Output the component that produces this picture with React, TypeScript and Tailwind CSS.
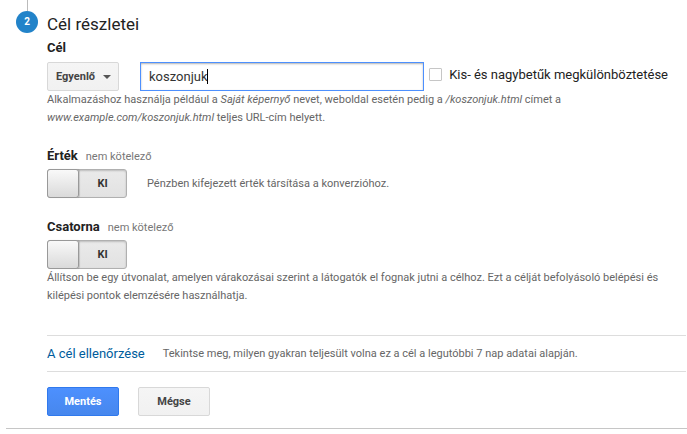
import React, { useState } from 'react'

const buttonBase = 'h-[29px] w-[72px] rounded-xs border text-[11px] font-bold cursor-pointer'

function Toggle({ labelId }: { labelId: string }) {
  const [on, setOn] = useState(false)

  return (
    <button
      type="button"
      role="switch"
      aria-checked={on}
      aria-labelledby={labelId}
      onClick={() => setOn(!on)}
      className={`flex h-[29px] w-20 shrink-0 rounded-[3px] border border-[#b0b0b0] bg-linear-to-b from-[#eaeaea] to-[#e2e2e2] shadow-[inset_0_1px_2px_rgba(0,0,0,0.2)] cursor-pointer ${on ? 'flex-row-reverse' : ''}`}
    >
      <span className="-my-px -ml-px h-[29px] w-8 rounded-[3px] border border-[#999] bg-linear-to-b from-[#f9f9f9] to-[#dadada] shadow-[1px_0_1px_rgba(0,0,0,0.15)]" />
      <span className="flex-1 text-[11px] leading-[27px] font-bold text-[#333]">{on ? 'BE' : 'KI'}</span>
    </button>
  )
}

function OptionTitle({ id, title }: { id: string; title: string }) {
  return (
    <div className="flex items-baseline gap-2 leading-5">
      <h3 id={id} className="text-[13px] font-bold text-[#222]">{title}</h3>
      <span className="text-[11px] text-[#777]">nem kötelező</span>
    </div>
  )
}

export default function App() {
  const [value, setValue] = useState('koszonjuk')
  const [caseSensitive, setCaseSensitive] = useState(false)

  return (
    <main className="bg-white pl-1.5 font-['Roboto','Liberation_Sans',sans-serif] text-[11px] leading-[18px] text-[#666]">
      <form className="flex border-b border-[#c6c6c6] pb-3 pl-2.5" onSubmit={(e) => e.preventDefault()}>
        <div className="flex w-[22px] shrink-0 flex-col items-center">
          <div className="h-[11px] w-px bg-[#bbb]" />
          <div className="flex size-[22px] items-center justify-center rounded-full bg-[#2283c9] text-[10px] font-bold text-white">2</div>
        </div>

        <div className="ml-[9px] mr-px min-w-0 flex-1 pt-3">
          <h2 className="text-[17px] leading-6 text-[#222]">Cél részletei</h2>
          <h3 id="goal" className="mt-0.5 text-[13px] leading-5 font-bold text-[#222]">Cél</h3>

          <div className="mt-1 flex items-center">
            <div className="relative shrink-0">
              <select
                aria-labelledby="goal"
                className={`${buttonBase} appearance-none border-[#d8d8d8] bg-linear-to-b from-[#f5f5f5] to-[#f1f1f1] pl-2 text-[#444]`}
              >
                <option>Egyenlő</option>
              </select>
              <svg className="pointer-events-none absolute top-[13px] right-2" width="8" height="4" viewBox="0 0 8 4">
                <path d="M0 0h8L4 4z" fill="#555" />
              </svg>
            </div>
            <div className="relative ml-[21px] min-w-0 flex-1">
              <input
                type="text"
                aria-labelledby="goal"
                value={value}
                onChange={(e) => setValue(e.target.value)}
                className="block h-[29px] w-full border border-[#4d90fe] px-2 text-[13px] text-[#333] shadow-[inset_0_1px_2px_rgba(0,0,0,0.3)] outline-none"
              />
              <span className="absolute top-[7px] left-[67px] h-[15px] w-px bg-black" />
            </div>
            <label className="-mt-1 mr-[18px] ml-[5px] flex shrink-0 items-center gap-[7px] text-[13px] text-[#222]">
              <input
                type="checkbox"
                checked={caseSensitive}
                onChange={(e) => setCaseSensitive(e.target.checked)}
                className="size-[13px] appearance-none rounded-[1px] border border-[#c6c6c6] bg-white checked:bg-[#4d90fe]"
              />
              Kis- és nagybetűk megkülönböztetése
            </label>
          </div>
          <p>
            Alkalmazáshoz használja például a <i>Saját képernyő</i> nevet, weboldal esetén pedig a <i>/koszonjuk.html</i> címet a{' '}
            <i>www.example.com/koszonjuk.html</i> teljes URL-cím helyett.
          </p>

          <section className="mt-[19px]">
            <OptionTitle id="ertek" title="Érték" />
            <div className="mt-0.5 flex items-center gap-5">
              <Toggle labelId="ertek" />
              <p>Pénzben kifejezett érték társítása a konverzióhoz.</p>
            </div>
          </section>

          <section className="mt-[19px]">
            <OptionTitle id="csatorna" title="Csatorna" />
            <div className="mt-0.5">
              <Toggle labelId="csatorna" />
            </div>
            <p>
              Állítson be egy útvonalat, amelyen várakozásai szerint a látogatók el fognak jutni a célhoz. Ezt a célját befolyásoló belépési és kilépési pontok elemzésére használhatja.
            </p>
          </section>

          <div className="mt-[30px] flex h-[37px] items-center gap-[18px] border-y border-[#ddd]">
            <a href="#ellenorzes" className="shrink-0 text-[13px] text-[#005c9c]">A cél ellenőrzése</a>
            <p>Tekintse meg, milyen gyakran teljesült volna ez a cél a legutóbbi 7 nap adatai alapján.</p>
          </div>

          <div className="mt-[15px] flex gap-[19px]">
            <button type="submit" className={`${buttonBase} border-[#3079ed] bg-linear-to-b from-[#4d90fe] to-[#4787ed] text-white`}>
              Mentés
            </button>
            <button type="button" className={`${buttonBase} border-[#d8d8d8] bg-linear-to-b from-[#f5f5f5] to-[#f1f1f1] text-[#444]`}>
              Mégse
            </button>
          </div>
        </div>
      </form>
    </main>
  )
}
